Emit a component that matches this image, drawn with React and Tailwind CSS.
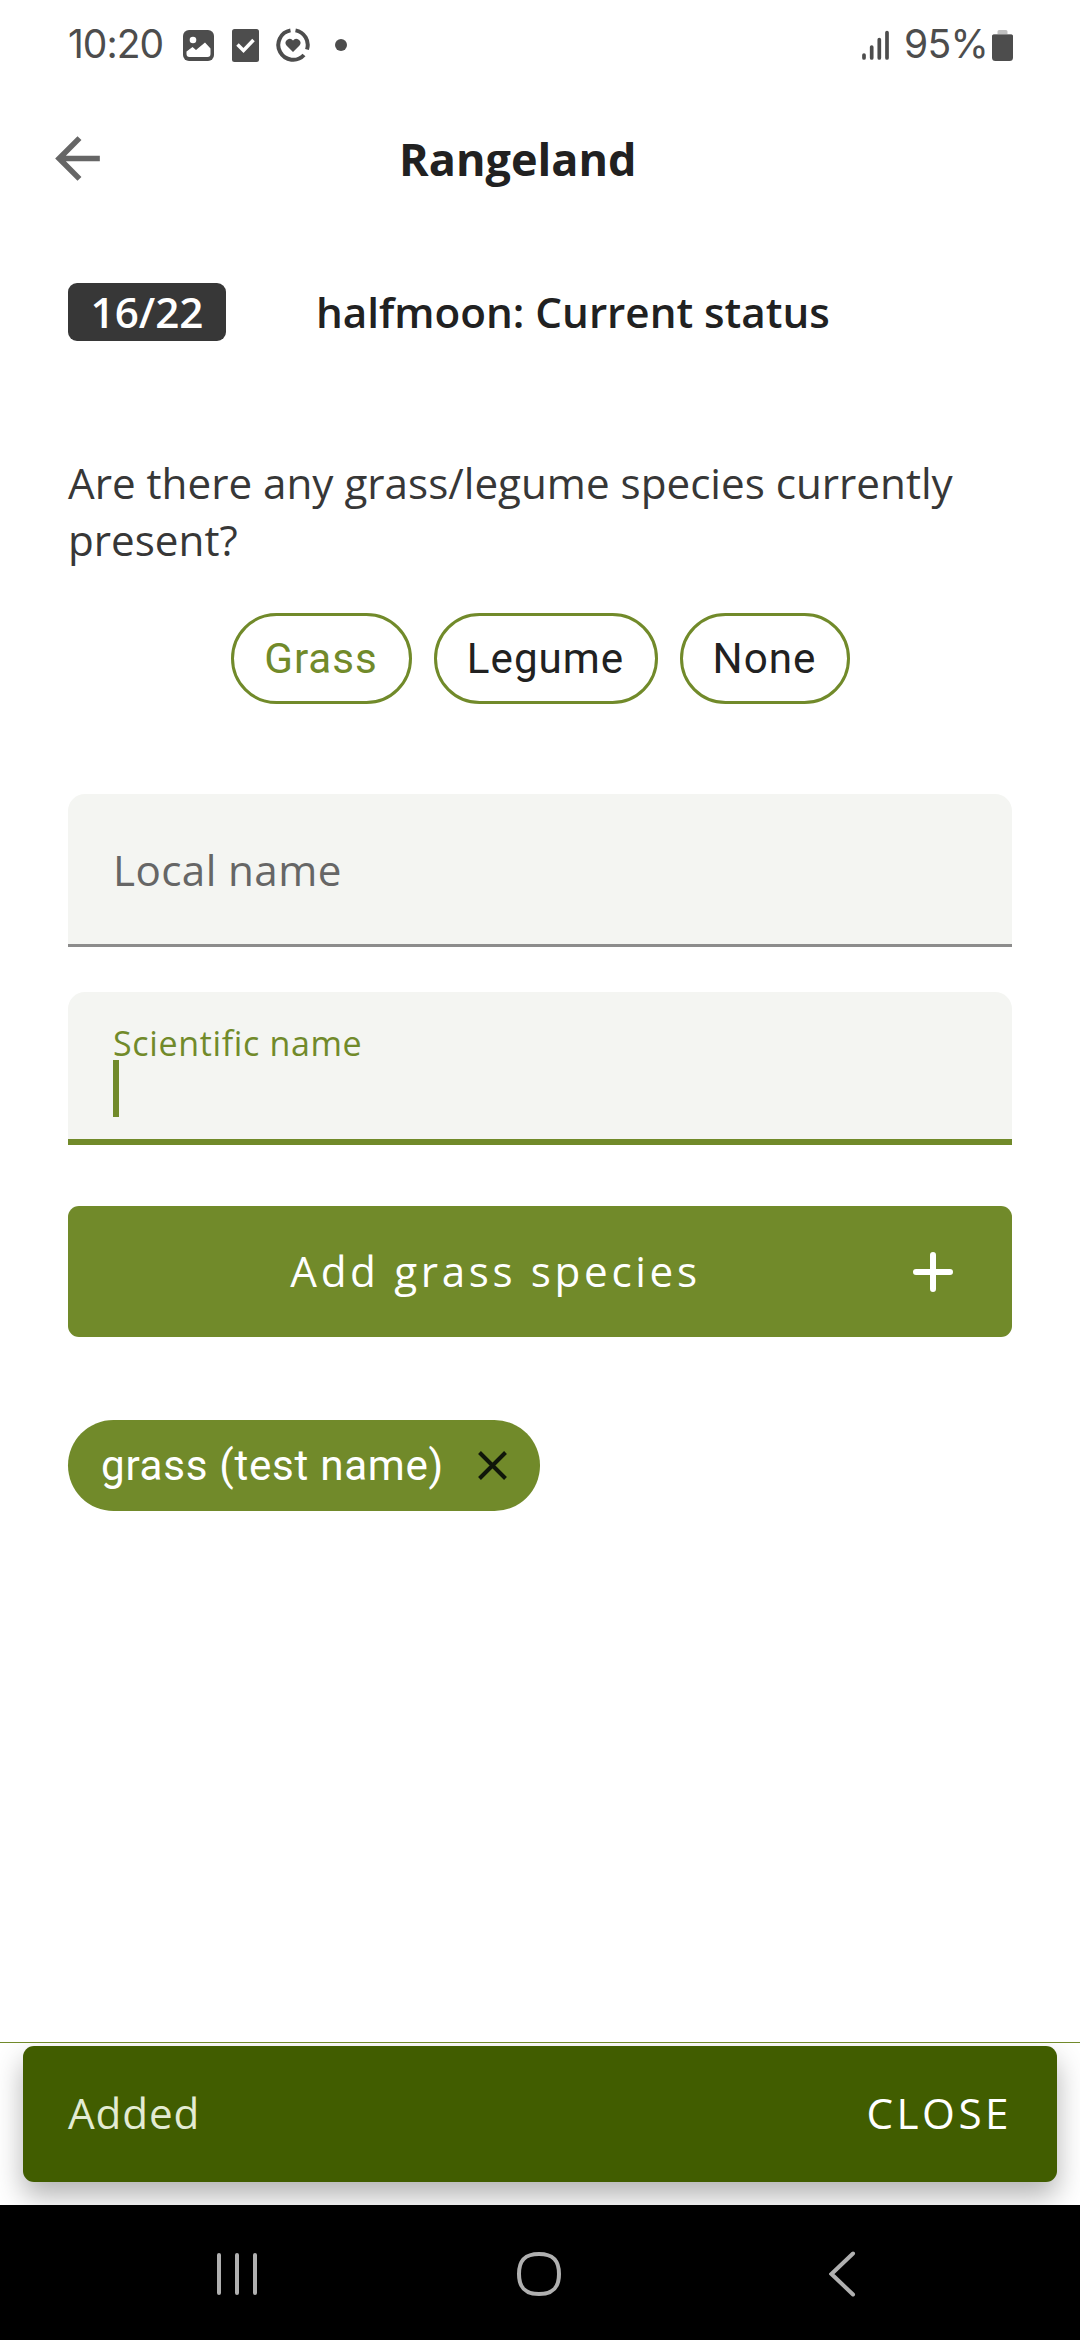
const NAV = "#b0b0b0";

function StatusBar() {
  return (
    <div className="flex h-[90px] items-center pl-[68px] pr-[67px] text-[#4d4d4d] font-['Inter',sans-serif]">
      <span className="w-[98px] whitespace-nowrap pb-[2px] text-[39px] leading-[48px] tracking-[-1px]">10:20</span>
      <svg className="ml-[17px]" width="31" height="31" viewBox="0 0 31 31">
        <rect width="31" height="31" rx="6" fill="#4d4d4d" />
        <circle cx="10" cy="10" r="3.3" fill="#fff" />
        <path d="M3.500 21.500 9.500 17l3.500 3L22 12.500l5.500 6V24a3 3 0 0 1-3 3h-18a3 3 0 0 1-3-3z" fill="#fff" />
      </svg>
      <svg className="ml-[18px]" width="27" height="33" viewBox="0 0 27 33">
        <rect width="27" height="33" rx="2.500" fill="#4d4d4d" />
        <path d="m5.500 15.500 6 6L21.500 11" fill="none" stroke="#fff" strokeWidth="3.500" />
      </svg>
      <svg className="ml-[17px]" width="34" height="34" viewBox="0 0 34 34">
        <g fill="none" stroke="#4d4d4d" strokeWidth="4">
          <path d="M14.500 2.400A14.800 14.800 0 1 0 28 27" />
          <path d="M19.500 2.400A14.800 14.800 0 0 1 31 21.500" />
        </g>
        <path d="M17 24 10.500 17.500a4 4 0 0 1 6.500-5 4 4 0 0 1 6.500 5z" fill="#4d4d4d" />
      </svg>
      <span className="ml-[25px] size-[12px] rounded-full bg-[#4d4d4d]" />
      <svg className="ml-auto" width="28" height="30" viewBox="0 0 28 30" stroke="#4d4d4d" strokeWidth="3.700" strokeLinecap="round">
        <path d="M2 25v3M9.700 17v11M17.300 9.500V28M25 2.500V28" />
      </svg>
      <span className="ml-[14px] w-[82px] whitespace-nowrap pb-[2px] text-[39px] leading-[48px] tracking-[-0.7px]">95%</span>
      <svg className="ml-[6px]" width="21" height="31" viewBox="0 0 21 31">
        <path d="M7 0h7a1.500 1.500 0 0 1 1.500 1.500V4H18a3 3 0 0 1 3 3H0a3 3 0 0 1 3-3h2.500V1.500A1.500 1.500 0 0 1 7 0z" fill="#c0c0c0" />
        <path d="M0 6a1.500 1.500 0 0 1 1.500-1.500h18A1.500 1.500 0 0 1 21 6v21.500a3.500 3.500 0 0 1-3.500 3.500h-14A3.500 3.500 0 0 1 0 27.500z" fill="#4d4d4d" />
      </svg>
    </div>
  );
}

function Choice({ children, className }) {
  return (
    <div className={`flex h-[91px] items-center justify-center rounded-full border-[3px] border-[#718a2a] font-['Roboto',sans-serif] tracking-[1px] ${className}`}>
      {children}
    </div>
  );
}

export default function App() {
  return (
    <div className="flex h-[2340px] w-[1080px] flex-col overflow-hidden bg-white font-['Open_Sans',sans-serif] text-[42.2px] leading-[57px] text-[#212121]">
      <StatusBar />
      <header className="flex h-[137px] items-center pl-[44px]">
        <svg width="67" height="67" viewBox="0 0 24 24" fill="#666">
          <path d="M20 11H7.830l5.590-5.590L12 4l-8 8 8 8 1.410-1.410L7.830 13H20v-2z" />
        </svg>
        <h1 className="ml-[288px] whitespace-nowrap text-[45px] font-bold leading-[60px]">Rangeland</h1>
      </header>

      <main className="flex flex-1 flex-col px-[68px] pt-[56px]">
        <div className="flex h-[58px] items-center font-semibold">
          <div className="flex h-[58px] w-[158px] items-center justify-center rounded-[9px] bg-[#373737] pb-[2px] text-white">16/22</div>
          <h2 className="ml-[90px] whitespace-nowrap pb-[2px]">halfmoon: Current status</h2>
        </div>

        <p className="mt-[113px] text-[#373737]">
          Are there any grass/legume species currently<br />present?
        </p>

        <div className="mt-[45px] flex justify-center gap-[22px]">
          <Choice className="w-[181px] text-[#718a2a]">Grass</Choice>
          <Choice className="w-[224px]">Legume</Choice>
          <Choice className="w-[170px]">None</Choice>
        </div>

        <div className="mt-[90px] flex h-[153px] items-center rounded-t-[17px] border-b-[3px] border-[#8c8c8c] bg-[#f4f5f2] pl-[45px] tracking-[0.4px] text-[#666]">
          Local name
        </div>
        <div className="mt-[45px] flex h-[153px] flex-col rounded-t-[17px] border-b-[6px] border-[#718a2a] bg-[#f4f5f2] pl-[45px] pt-[28px] text-[#718a2a]">
          <span className="h-[40px] text-[34px] leading-[46px] tracking-[0.65px]">Scientific name</span>
          <span className="h-[57px] w-[6px] bg-[#718a2a]" />
        </div>

        <button className="mt-[61px] flex h-[131px] items-center rounded-[11px] bg-[#718a2a] pr-[59px] text-white">
          <span className="flex-1 pb-[2px] pl-[10px] text-center tracking-[3.65px]">Add grass species</span>
          <svg width="40" height="40" viewBox="0 0 40 40" stroke="#fff" strokeWidth="6" strokeLinecap="round">
            <path d="M20 3v34M3 20h34" />
          </svg>
        </button>

        <div className="mt-[83px] flex h-[91px] w-[472px] items-center rounded-full bg-[#718a2a] pl-[33px] pr-[33px] font-['Roboto',sans-serif] tracking-[0.7px] text-white">
          <span className="flex-1 whitespace-nowrap">grass (test name)</span>
          <svg width="29" height="29" viewBox="0 0 29 29" stroke="#10160a" strokeWidth="4">
            <path d="m1.500 1.500 26 26M27.500 1.500l-26 26" />
          </svg>
        </div>
      </main>

      <div className="flex h-[163px] shrink-0 flex-col overflow-hidden border-t border-[#718a2a] px-[23px] pt-[3px]">
        <div className="flex h-[136px] items-center justify-between rounded-[11px] bg-[#415d00] px-[45px] pb-[3px] shadow-[0_14px_28px_rgba(0,0,0,0.3)]">
          <span className="tracking-[0.9px] text-[#e3ebd3]">Added</span>
          <span className="tracking-[3.5px] text-white">CLOSE</span>
        </div>
      </div>

      <nav className="flex h-[135px] shrink-0 items-center bg-black pl-[217px] pt-[3px]">
        <svg width="40" height="44" viewBox="0 0 40 44" stroke={NAV} strokeWidth="4" strokeLinecap="round">
          <path d="M2 3v38M20 3v38M38 3v38" />
        </svg>
        <svg className="ml-[260px]" width="44" height="44" viewBox="0 0 44 44" fill="none" stroke={NAV} strokeWidth="4">
          <path d="M22 2c14 0 20 6 20 20s-6 20-20 20S2 36 2 22 8 2 22 2z" />
        </svg>
        <svg className="ml-[268px]" width="27" height="46" viewBox="0 0 27 46" fill="none" stroke={NAV} strokeWidth="4" strokeLinecap="round">
          <path d="M24 2.500 2.500 23 24 43.500" />
        </svg>
      </nav>
    </div>
  );
}
